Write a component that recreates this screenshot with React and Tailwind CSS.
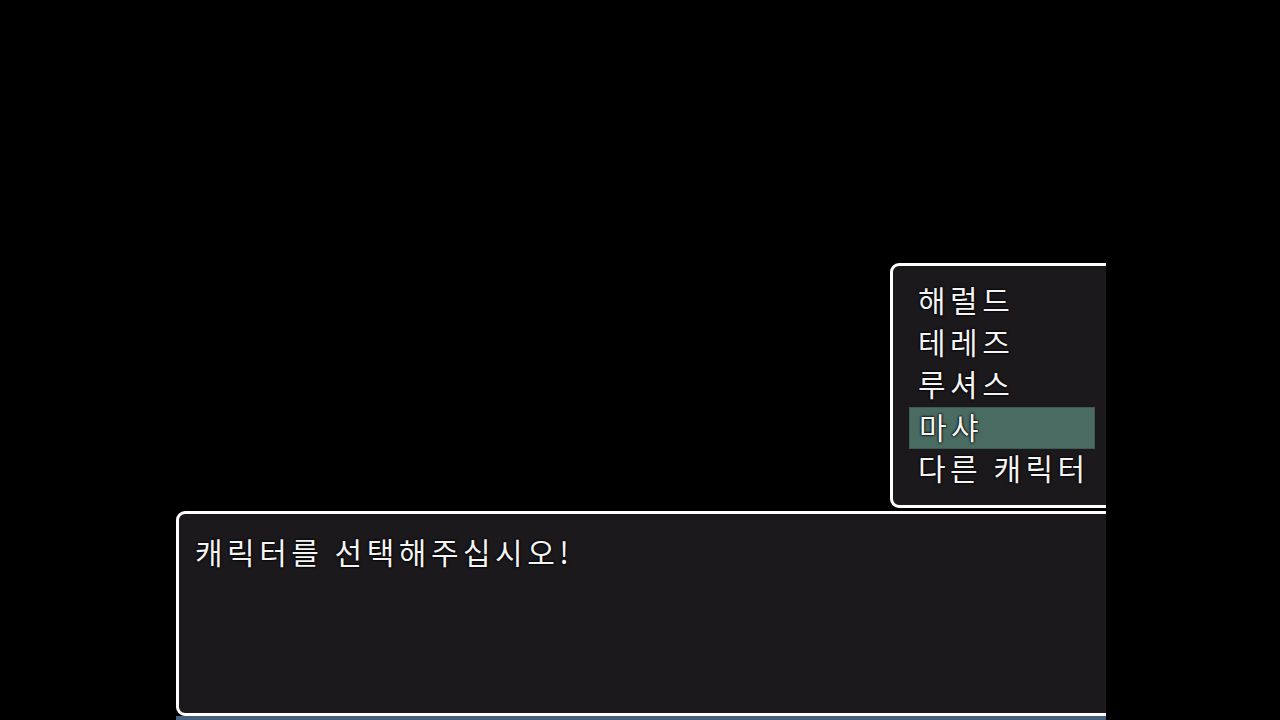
const choices = ["해럴드", "테레즈", "루셔스", "마샤", "다른 캐릭터"];

const App = () => {
  const selected = 3;

  return (
    <div className="w-[1280px] h-[720px] bg-black overflow-hidden font-['Noto_Sans_CJK_KR','Noto_Sans',sans-serif] text-[#f4f4f4] [text-shadow:0_0_3px_#000,0_0_2px_#000,0_0_1px_#000]">
      <div className="w-[1106px] h-[720px] overflow-hidden flex flex-col pt-[263px]">
        {/* choice window */}
        <div className="ml-[890px] w-[240px] h-[245px] shrink-0 rounded-[9px] border-[3px] border-white bg-[#1b191c] pt-[15px] pl-[16px]">
          {choices.map((name, i) => (
            <div
              key={i}
              className={
                i === selected
                  ? "w-[186px] h-[42px] leading-[36px] pl-[9px] text-[30px] tracking-[4.5px] whitespace-nowrap bg-[#4a6b62] border border-[#3e5a52]"
                  : "w-[186px] h-[42px] leading-[36px] pl-[9px] text-[30px] tracking-[4.5px] whitespace-nowrap"
              }
            >
              {name}
            </div>
          ))}
        </div>

        {/* message window */}
        <div className="ml-[176px] mt-[3px] w-[960px] h-[205px] shrink-0 rounded-[9px] border-[3px] border-white bg-[#1b191c] pt-[16px] pl-[16px]">
          <p className="text-[30px] leading-[42px] tracking-[4.5px] whitespace-nowrap">캐릭터를 선택해주십시오!</p>
        </div>
        <div className="ml-[176px] h-[4px] w-[960px] bg-[#46607e]"></div>
      </div>
    </div>
  );
};

export default App;
